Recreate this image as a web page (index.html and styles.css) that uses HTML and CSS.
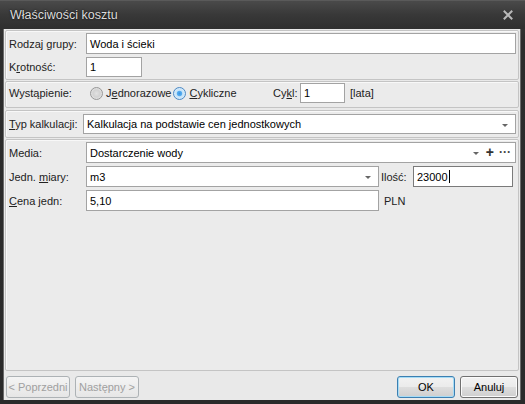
FILE: index.html
```html
<!DOCTYPE html>
<html lang="pl">
<head>
<meta charset="utf-8">
<title>Właściwości kosztu</title>
<link rel="stylesheet" href="styles.css">
</head>
<body>
<div class="window">
  <div class="titlebar">
    <span class="title">Właściwości kosztu</span>
    <svg class="close" width="10" height="10" viewBox="0 0 10 10"><path d="M1.5 1.5 L8.5 8.5 M8.5 1.5 L1.5 8.5" stroke="#b9b9b9" stroke-width="2" stroke-linecap="square"/></svg>
  </div>
  <div class="client">
    <div class="panel p1">
      <div class="row h21"><span class="lbl w77">Rodzaj grupy:</span><div class="field grow">Woda i ścieki</div></div>
      <div class="row h20"><span class="lbl w77">K<u>r</u>otność:</span><div class="field w56">1</div></div>
    </div>
    <div class="panel p2">
      <div class="row h20">
        <span class="lbl w81">Wystąpienie:</span>
        <div class="radios">
          <span class="radio"></span><span class="rtext">J<u>e</u>dnorazowe</span>
          <span class="radio on"></span><span class="rtext"><u>C</u>ykliczne</span>
        </div>
        <span class="lbl w27">Cy<u>k</u>l:</span><div class="field w45">1</div><span class="unit">[lata]</span>
      </div>
    </div>
    <div class="panel p3">
      <div class="row h20"><span class="lbl w74"><u>T</u>yp kalkulacji:</span><div class="field grow combo">Kalkulacja na podstawie cen jednostkowych<span class="arrow"></span></div></div>
    </div>
    <div class="panel p4">
      <div class="row h21"><span class="lbl w77">Media:</span><div class="field grow combo">Dostarczenie wody<span class="arrow a2"></span><span class="plus">+</span><span class="dots">···</span></div></div>
      <div class="row h21"><span class="lbl w77">Jedn. <u>m</u>iary:</span><div class="field w293 combo">m3<span class="arrow"></span></div><span class="lbl w32 ml2">Ilość:</span><div class="field w100 focus">23000<span class="caret"></span></div></div>
      <div class="row h21"><span class="lbl w77"><u>C</u>ena jedn:</span><div class="field w293">5,10</div><span class="unit ml2">PLN</span></div>
    </div>
    <div class="footer">
      <button class="btn dis w64">&lt; Poprzedni</button>
      <button class="btn dis w64">Następny &gt;</button>
      <span class="spacer"></span>
      <button class="btn def w58">OK</button>
      <button class="btn w58">Anuluj</button>
    </div>
  </div>
</div>
</body>
</html>
```

FILE: styles.css
```css
* { box-sizing: border-box; }
html, body { margin: 0; padding: 0; }
body {
  width: 525px; height: 404px; overflow: hidden;
  background: #2b2b2b;
  font-family: "Liberation Sans", Arial, sans-serif;
  font-size: 11px; color: #222;
}
.window {
  width: 525px; height: 404px;
  display: flex; flex-direction: column;
  background: linear-gradient(#3c3c3c, #2c2c2c 40px, #2a2a2a);
  border-top: 1px solid #5a5a5a;
}
.titlebar {
  height: 28px; display: flex; align-items: center;
  padding: 0 12px 0 10px;
  background: linear-gradient(#4a4a4a, #383838 50%, #2f2f2f);
}
.title { color: #dcdcdc; font-size: 12.5px; text-shadow: 0 0 2px #000; flex: 1; padding-bottom: 1px; }
.close { display: block; }
.client {
  margin: 0 4px 0 3px; height: 371px;
  background: #e9e9e9;
  padding: 1px 1px 0 1px;
  display: flex; flex-direction: column;
  border: 1px solid #6a6a6a; border-bottom: none; border-top: none;
}
.panel {
  border: 1px solid #c4c4c4; border-radius: 2px;
  background: #ebebeb;
  padding: 2px 2px 2px 3px;
  display: flex; flex-direction: column; gap: 3px;
  box-shadow: inset 1px 1px 0 #f8f8f8;
}
.p1 { height: 50px; }
.p2 { margin-top: 1px; height: 27px; padding-top: 1px; }
.p3 { margin-top: 2px; height: 28px; padding-top: 3px; }
.p4 { margin-top: 1px; flex: 1; }
.row { display: flex; align-items: center; }
.h21 { height: 21px; }
.h20 { height: 20px; }
.lbl { flex: none; white-space: nowrap; }
.w77 { width: 77px; }
.w81 { width: 81px; }
.w74 { width: 74px; }
.w27 { width: 27px; }
.w32 { width: 32px; }
.ml2 { margin-left: 2px; }
.field {
  height: 100%; background: #fff;
  border: 1px solid #a3a3a3;
  padding: 0 3px; display: flex; align-items: center;
  color: #000; position: relative; white-space: nowrap;
}
.grow { flex: 1; }
.w56 { width: 56px; }
.w45 { width: 45px; }
.w293 { width: 293px; flex: none; }
.w100 { width: 100px; flex: none; }
.focus { border-color: #7a7a7a; }
.caret { display: inline-block; width: 1px; height: 13px; background: #000; margin-left: 1px; }
.combo .arrow {
  position: absolute; right: 7px; top: 9px;
  width: 0; height: 0;
  border-left: 3px solid transparent; border-right: 3px solid transparent;
  border-top: 3px solid #666;
}
.combo .a2 { right: 36px; }
.plus { position: absolute; right: 21px; top: 1px; font-size: 14px; font-weight: bold; color: #333; }
.dots { position: absolute; right: 4px; top: 2px; font-size: 12px; font-weight: bold; color: #444; letter-spacing: 0; }
.radios { width: 183px; display: flex; align-items: center; flex: none; }
.radio {
  width: 13px; height: 13px; border-radius: 50%; flex: none;
  border: 1px solid #979797;
  background: radial-gradient(circle at 50% 50%, #e2e2e2 0, #d2d2d2 45%, #f4f4f4 100%);
}
.radio.on {
  border-color: #4a88c4;
  background: radial-gradient(circle at 50% 50%, #3a95e4 0, #58aef0 30%, #c3e2f8 40%, #e8f2fb 100%);
}
.rtext { margin-left: 3px; margin-right: 2px; }
.unit { margin-left: 5px; }
.footer {
  height: 29px; display: flex; align-items: flex-start;
  padding: 5px 1px 0 1px; gap: 5px;
}
.spacer { flex: 1; }
.btn {
  height: 22px; font-family: "Liberation Sans", Arial, sans-serif; font-size: 11px;
  border: 1px solid #707070; border-radius: 3px;
  background: linear-gradient(#f2f2f2, #ebebeb 48%, #dddddd 52%, #cfcfcf);
  color: #000; padding: 0; margin: 0;
  box-shadow: inset 0 0 0 1px #fbfbfb;
}
.w64 { width: 64px; }
.w58 { width: 58px; }
.btn.def { border-color: #3c7fb1; box-shadow: inset 0 0 0 1px #a6dcf6; }
.btn.dis { border-color: #adb2b5; background: linear-gradient(#f4f4f4, #e6e6e6); color: #a0a0a0; box-shadow: none; }
u { text-decoration: underline; text-underline-offset: 1px; }
```
